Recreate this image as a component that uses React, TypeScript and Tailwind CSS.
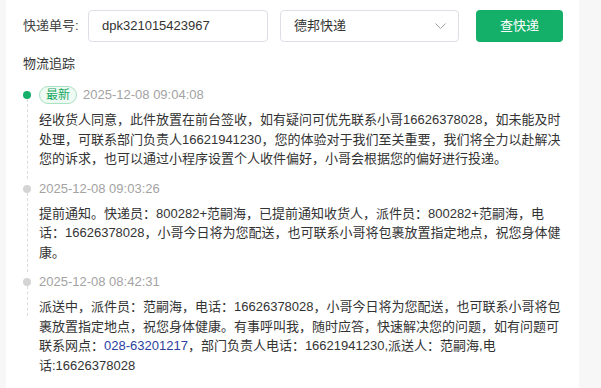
import { ReactNode } from 'react'

type Entry = {
  time: string
  latest?: boolean
  lines: ReactNode[]
}

const entries: Entry[] = [
  {
    time: '2025-12-08 09:04:08',
    latest: true,
    lines: [
      '经收货人同意，此件放置在前台签收，如有疑问可优先联系小哥16626378028，如未能及时',
      '处理，可联系部门负责人16621941230，您的体验对于我们至关重要，我们将全力以赴解决',
      '您的诉求，也可以通过小程序设置个人收件偏好，小哥会根据您的偏好进行投递。',
    ],
  },
  {
    time: '2025-12-08 09:03:26',
    lines: [
      '提前通知。快递员：800282+范嗣海，已提前通知收货人，派件员：800282+范嗣海，电',
      '话：16626378028，小哥今日将为您配送，也可联系小哥将包裹放置指定地点，祝您身体健',
      '康。',
    ],
  },
  {
    time: '2025-12-08 08:42:31',
    lines: [
      '派送中，派件员：范嗣海，电话：16626378028，小哥今日将为您配送，也可联系小哥将包',
      '裹放置指定地点，祝您身体健康。有事呼叫我，随时应答，快速解决您的问题，如有问题可',
      <>
        联系网点：<span className="text-[#2b3f9e]">028-63201217</span>
        ，部门负责人电话：16621941230,派送人：范嗣海,电
      </>,
      '话:16626378028',
    ],
  },
]

const TimelineItem = ({ entry, last }: { entry: Entry; last: boolean }) => (
  <div className="flex">
    <div className="flex w-[16px] shrink-0 flex-col">
      <div
        className={
          entry.latest
            ? 'mt-[6px] h-[8px] w-[8px] rounded-full bg-[#14b06a]'
            : 'mt-[6px] h-[8px] w-[8px] rounded-full bg-[#d4d4d4]'
        }
      />
      <div
        className={
          last
            ? 'ml-[3.5px] h-[30px] border-l border-dashed border-[#dcdcdc]'
            : 'ml-[3.5px] flex-1 border-l border-dashed border-[#dcdcdc]'
        }
      />
    </div>
    <div className="flex-1 pb-[10px]">
      <div className="flex h-[20px] items-center gap-[6px]">
        {entry.latest && (
          <span className="flex h-[18px] items-center rounded-full border border-[#a9e2c3] bg-[#eefaf3] px-[6px] text-[12px] text-[#17a861]">
            最新
          </span>
        )}
        <span className="text-[13px] text-[#a3a3a3]">{entry.time}</span>
      </div>
      <div className="mt-[5px] text-[13px] leading-[19.5px] text-[#333]">
        {entry.lines.map((line, i) => (
          <div key={i} className="whitespace-nowrap">
            {line}
          </div>
        ))}
      </div>
    </div>
  </div>
)

export default function App() {
  return (
    <div className="min-h-screen bg-[#f7f7f7] pl-[6px] font-['Liberation_Sans','Noto_Sans_CJK_SC',sans-serif]">
      <div className="min-h-[388px] w-[573px] bg-white pl-[17px] pr-[16px] pt-[10px]">
        <div className="flex items-center">
          <span className="w-[65px] text-[13px] text-[#444]">快递单号:</span>
          <div className="flex h-[32px] w-[180px] items-center rounded-[4px] border border-[#dcdfe6] px-[13px] text-[13px] text-[#333]">
            dpk321015423967
          </div>
          <div className="ml-[12px] flex h-[32px] w-[179px] items-center justify-between rounded-[4px] border border-[#dcdfe6] pl-[13px] pr-[12px] text-[13px] text-[#333]">
            <span>德邦快递</span>
            <svg width="11" height="6" viewBox="0 0 11 6" fill="none">
              <path d="M0.5 0.5l5 5 5-5" stroke="#a0a0a0" strokeWidth="1" />
            </svg>
          </div>
          <button
            type="button"
            className="ml-[17px] flex h-[32px] w-[87px] items-center justify-center rounded-[4px] bg-[#14b06a] text-[13px] text-white"
          >
            查快递
          </button>
        </div>
        <div className="mt-[12px] text-[13px] leading-[20px] text-[#333]">物流追踪</div>
        <div className="mt-[11px]">
          {entries.map((entry, i) => (
            <TimelineItem key={i} entry={entry} last={i === entries.length - 1} />
          ))}
        </div>
      </div>
    </div>
  )
}
